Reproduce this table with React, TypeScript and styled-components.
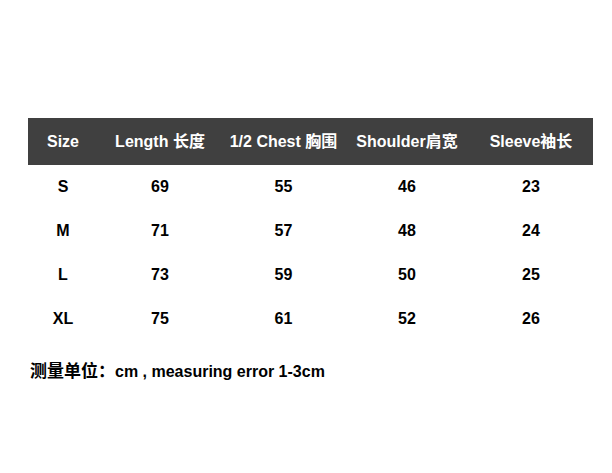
import React from 'react';
import styled, { createGlobalStyle } from 'styled-components';

const GlobalStyle = createGlobalStyle`
  html, body {
    margin: 0;
    padding: 0;
    background: #ffffff;
  }
  body {
    font-family: "Liberation Sans", Arial, "Noto Sans CJK SC", sans-serif;
  }
`;

interface IRow {
  size: string;
  length: number;
  chest: number;
  shoulder: number;
  sleeve: number;
}

const rows: IRow[] = [
  { size: 'S', length: 69, chest: 55, shoulder: 46, sleeve: 23 },
  { size: 'M', length: 71, chest: 57, shoulder: 48, sleeve: 24 },
  { size: 'L', length: 73, chest: 59, shoulder: 50, sleeve: 25 },
  { size: 'XL', length: 75, chest: 61, shoulder: 52, sleeve: 26 },
];

const headers = ['Size', 'Length 长度', '1/2 Chest 胸围', 'Shoulder肩宽', 'Sleeve袖长'];

const App: React.FC = () => {
  return (
    <Page>
      <GlobalStyle />
      <Table>
        <HeadRow>
          {headers.map((h) => (
            <HeadCell key={h}>{h}</HeadCell>
          ))}
        </HeadRow>
        {rows.map((r) => (
          <BodyRow key={r.size}>
            <Cell>{r.size}</Cell>
            <Cell>{r.length}</Cell>
            <Cell>{r.chest}</Cell>
            <Cell>{r.shoulder}</Cell>
            <Cell>{r.sleeve}</Cell>
          </BodyRow>
        ))}
      </Table>
      <Note>
        <NoteCjk>测量单位：</NoteCjk>cm , measuring error 1-3cm
      </Note>
    </Page>
  );
};

const Page = styled.div`
  width: 612px;
  height: 473px;
  padding: 118px 19px 0 28px;
  box-sizing: border-box;
  display: flex;
  flex-direction: column;
`;

const Table = styled.div`
  width: 565px;
  display: flex;
  flex-direction: column;
`;

const columns = '70px 124px 123px 124px 124px';

const HeadRow = styled.div`
  display: grid;
  grid-template-columns: ${columns};
  height: 47px;
  background-color: #404040;
  align-items: center;
`;

const HeadCell = styled.div`
  text-align: center;
  color: #ffffff;
  font-size: 16px;
  line-height: 18px;
  height: 18px;
  font-weight: bold;
  white-space: nowrap;
`;

const BodyRow = styled.div`
  display: grid;
  grid-template-columns: ${columns};
  height: 44px;
  align-items: center;
`;

const Cell = styled.div`
  text-align: center;
  color: #000000;
  font-size: 16px;
  font-weight: bold;
`;

const Note = styled.div`
  margin-top: 22px;
  padding-left: 2px;
  font-size: 16px;
  line-height: 18px;
  font-weight: bold;
  color: #000000;
  white-space: nowrap;
`;

const NoteCjk = styled.span`
  font-size: 17px;
`;

export default App;
